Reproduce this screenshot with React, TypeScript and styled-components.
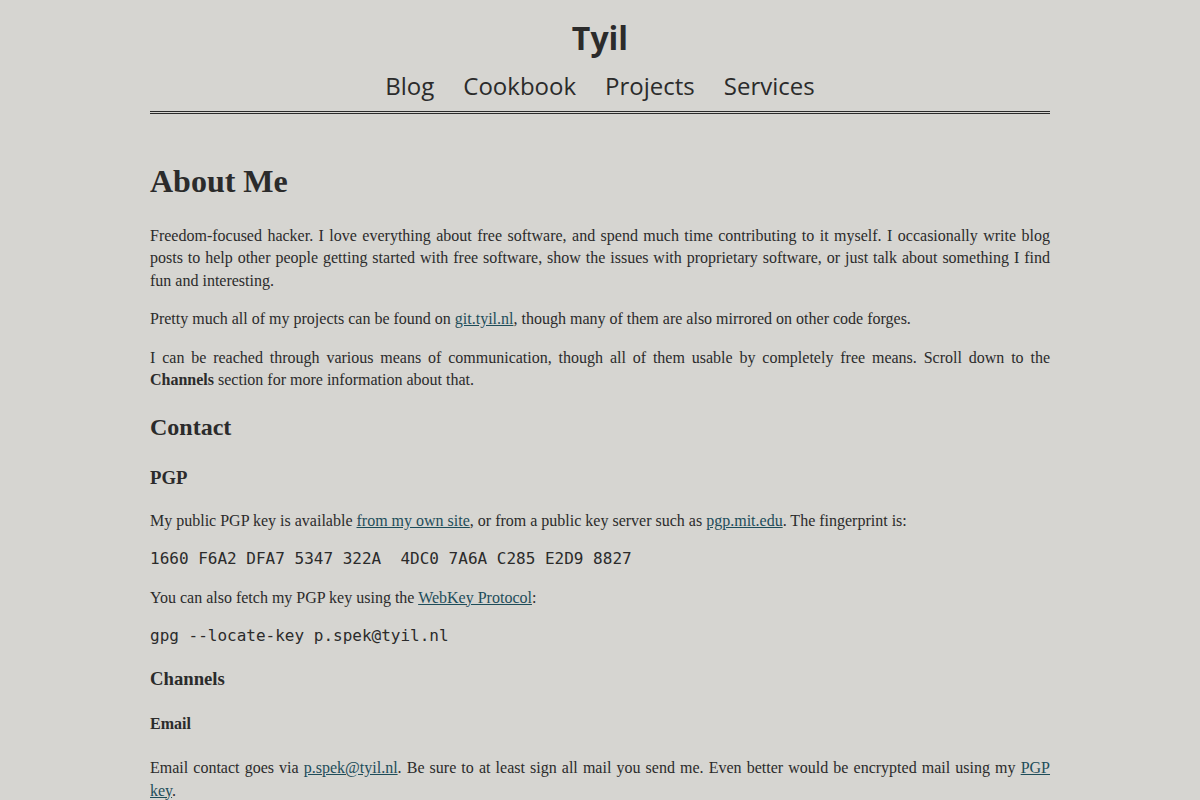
import React from 'react';
import styled, { createGlobalStyle } from 'styled-components';

const GlobalStyle = createGlobalStyle`
  html, body {
    margin: 0;
    padding: 0;
    background: #d6d5d1;
    color: #2b2b2b;
  }

  body {
    font-family: "Liberation Serif", "Times New Roman", serif;
    font-size: 16px;
    line-height: 1.4;
  }
`;

const Page = styled.div`
  width: 900px;
  margin: 0 auto;
`;

const Header = styled.header`
  padding: 16px 0 9px;
  border-bottom: 3px double #2b2b2b;
  text-align: center;
  font-family: "Open Sans", "Noto Sans", sans-serif;
`;

const SiteTitle = styled.div`
  font-size: 32px;
  font-weight: 700;
  line-height: 1.4;
`;

const Nav = styled.nav`
  display: flex;
  justify-content: center;
  gap: 29px;
  margin-top: 8px;
  font-size: 24px;
  line-height: 1.4;

  a {
    color: #2b2b2b;
    text-decoration: none;
  }
`;

const Main = styled.main`
  padding-top: 23px;
  text-align: justify;

  h1 {
    font-size: 32px;
    margin: 21.44px 0;
  }

  h2 {
    font-size: 24px;
    margin: 19.92px 0;
  }

  h3 {
    font-size: 18.72px;
    margin: 18.72px 0;
  }

  h4 {
    font-size: 16px;
    margin: 21.28px 0;
  }

  p {
    margin: 16px 0;
  }

  a {
    color: #1e4d5a;
  }
`;

const Code = styled.pre`
  font-family: "DejaVu Sans Mono", monospace;
  font-size: 16px;
  line-height: 1.4;
  margin: 16px 0;
  white-space: pre;
`;

const navItems = ['Blog', 'Cookbook', 'Projects', 'Services'];

const App = () => {
  return (
    <Page>
      <GlobalStyle />
      <Header>
        <SiteTitle>Tyil</SiteTitle>
        <Nav>
          {navItems.map((item) => (
            <a key={item} href="#">{item}</a>
          ))}
        </Nav>
      </Header>
      <Main>
        <h1>About Me</h1>
        <p>Freedom-focused hacker. I love everything about free software, and spend much time contributing
          to it myself. I occasionally write blog posts to help other people getting started with free
          software, show the issues with proprietary software, or just talk about something I find fun and
          interesting.</p>
        <p>Pretty much all of my projects can be found on <a href="#">git.tyil.nl</a>, though many of them
          are also mirrored on other code forges.</p>
        <p>I can be reached through various means of communication, though all of them usable by completely
          free means. Scroll down to the <strong>Channels</strong> section for more information about that.</p>

        <h2>Contact</h2>
        <h3>PGP</h3>
        <p>My public PGP key is available <a href="#">from my own site</a>, or from a public key server such
          as <a href="#">pgp.mit.edu</a>. The fingerprint is:</p>
        <Code>1660 F6A2 DFA7 5347 322A  4DC0 7A6A C285 E2D9 8827</Code>
        <p>You can also fetch my PGP key using the <a href="#">WebKey Protocol</a>:</p>
        <Code>gpg --locate-key p.spek@tyil.nl</Code>

        <h3>Channels</h3>
        <h4>Email</h4>
        <p>Email contact goes via <a href="#">p.spek@tyil.nl</a>. Be sure to at least sign all mail you send
          me. Even better would be encrypted mail using my <a href="#">PGP key</a>.</p>
      </Main>
    </Page>
  );
};

export default App;
